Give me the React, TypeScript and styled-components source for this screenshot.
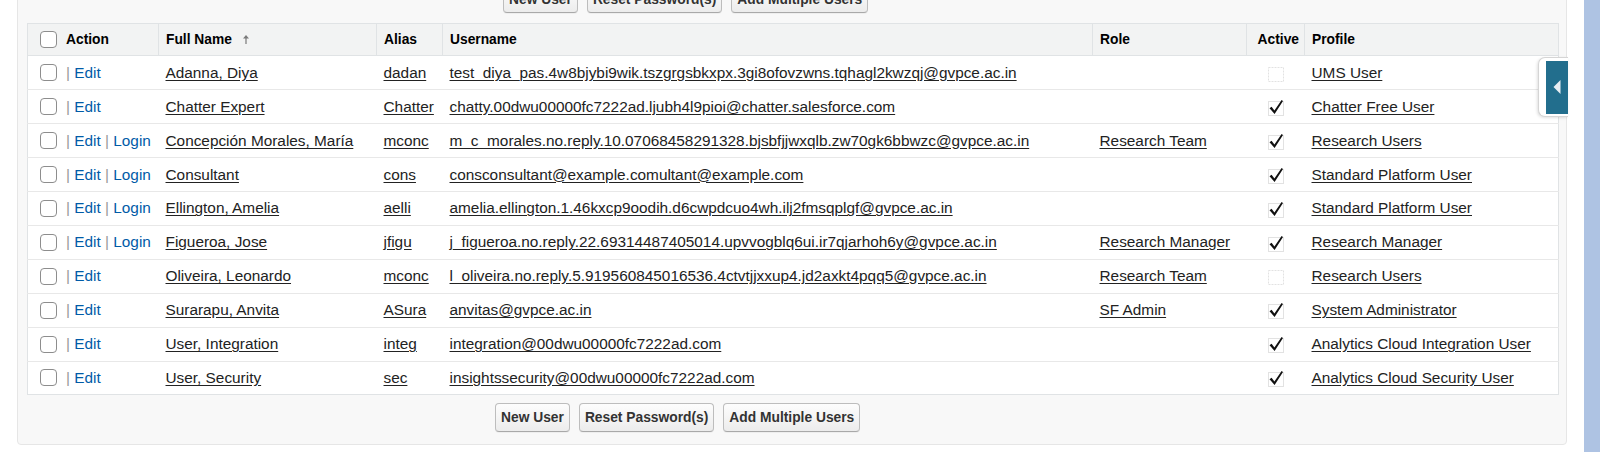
import styled, { createGlobalStyle } from 'styled-components';

const GlobalStyle = createGlobalStyle`
  html, body {
    margin: 0;
    padding: 0;
    background: #fff;
  }
  body {
    font-family: 'Liberation Sans', Arial, Helvetica, sans-serif;
    overflow: hidden;
  }
`;

const Page = styled.div`
  position: relative;
  display: flex;
  width: 1600px;
  height: 452px;
  overflow: hidden;
  padding-left: 17px;
  box-sizing: border-box;
`;

const Panel = styled.div`
  width: 1550px;
  height: 465px;
  margin-top: -20px;
  box-sizing: border-box;
  background: #f8f8f8;
  border: 1px solid #e6e6e6;
  border-radius: 4px;
  padding: 0 8.5px 0 9px;
  flex-shrink: 0;
`;

const SideStrip = styled.div`
  margin-left: 17px;
  width: 16px;
  height: 100%;
  background: #aec3e3;
  flex-shrink: 0;
`;

const ButtonBar = styled.div<{ $offset: number; $top: number; $bottom: number }>`
  display: flex;
  gap: 9px;
  padding: ${(p) => p.$top}px 0 ${(p) => p.$bottom}px ${(p) => p.$offset}px;
`;

const Button = styled.button`
  height: 28.5px;
  padding: 0 5px;
  box-sizing: border-box;
  font-family: inherit;
  font-size: 13.8px;
  font-weight: bold;
  color: #333;
  background: linear-gradient(#fdfdfd, #ececec);
  border: 1px solid #bdbdbd;
  border-bottom-color: #a9a9a9;
  border-radius: 4px;
  box-shadow: 0 1px 0 rgba(0, 0, 0, 0.04);
  cursor: pointer;
`;

const Table = styled.table`
  width: 1530.5px;
  table-layout: fixed;
  border-collapse: collapse;
  background: #fff;
  border: 1px solid #e0e3e5;
`;

const HeadRow = styled.tr`
  height: 32.5px;
  background: #f2f3f3;
  border-bottom: 1px solid #e0e3e5;
`;

const Th = styled.th<{ $align?: string }>`
  padding: 0 ${(p) => (p.$align === 'right' ? '5px' : '7px')};
  text-align: ${(p) => p.$align || 'left'};
  font-size: 13.8px;
  font-weight: bold;
  color: #000;
  white-space: nowrap;
  border-left: 1px solid #e0e3e5;
  &:first-child {
    border-left: none;
    padding-left: 12px;
  }
`;

const Row = styled.tr`
  height: 33.9px;
  border-bottom: 1px solid #e8e8e8;
  &:last-child {
    border-bottom: none;
  }
`;

const Td = styled.td<{ $center?: boolean }>`
  padding: 0 7px;
  font-size: 15.36px;
  color: #222;
  white-space: nowrap;
  overflow: hidden;
  text-align: ${(p) => (p.$center ? 'center' : 'left')};
  &:first-child {
    padding-left: 12px;
  }
`;

const Cell = styled.div`
  display: flex;
  align-items: center;
`;

const Box = styled.span`
  display: inline-block;
  width: 15px;
  height: 15px;
  border: 1px solid #8d8d8d;
  border-radius: 4px;
  background: #fff;
  margin-right: 9px;
  flex-shrink: 0;
`;

const Pipe = styled.span`
  color: #9a9a9a;
  white-space: pre;
`;

const ActionLink = styled.a`
  color: #015ba7;
  text-decoration: none;
`;

const DataLink = styled.a`
  color: #222;
  text-decoration: underline;
  text-underline-offset: 2px;
`;

const SortArrow = styled.svg`
  margin-left: 11px;
  vertical-align: 0;
`;

const HandleWrap = styled.div`
  position: absolute;
  left: 1538px;
  top: 57px;
  width: 30px;
  height: 60px;
  box-sizing: border-box;
  background: #fff;
  border: 1px solid #d5d5d5;
  border-right: none;
  border-radius: 7px 0 0 7px;
  box-shadow: -1px 1px 3px rgba(0, 0, 0, 0.12);
  display: flex;
  align-items: center;
  justify-content: flex-end;
`;

const Handle = styled.div`
  width: 22px;
  height: 53px;
  background: #226e8d;
  display: flex;
  align-items: center;
  justify-content: center;
`;

type User = {
  login: boolean;
  name: string;
  alias: string;
  username: string;
  role: string;
  active: boolean;
  profile: string;
};

const users: User[] = [
  { login: false, name: 'Adanna, Diya', alias: 'dadan', username: 'test_diya_pas.4w8bjybi9wik.tszgrgsbkxpx.3gi8ofovzwns.tqhagl2kwzqj@gvpce.ac.in', role: '', active: false, profile: 'UMS User' },
  { login: false, name: 'Chatter Expert', alias: 'Chatter', username: 'chatty.00dwu00000fc7222ad.ljubh4l9pioi@chatter.salesforce.com', role: '', active: true, profile: 'Chatter Free User' },
  { login: true, name: 'Concepción Morales, María', alias: 'mconc', username: 'm_c_morales.no.reply.10.07068458291328.bjsbfjjwxqlb.zw70gk6bbwzc@gvpce.ac.in', role: 'Research Team', active: true, profile: 'Research Users' },
  { login: true, name: 'Consultant', alias: 'cons', username: 'consconsultant@example.comultant@example.com', role: '', active: true, profile: 'Standard Platform User' },
  { login: true, name: 'Ellington, Amelia', alias: 'aelli', username: 'amelia.ellington.1.46kxcp9oodih.d6cwpdcuo4wh.ilj2fmsqplgf@gvpce.ac.in', role: '', active: true, profile: 'Standard Platform User' },
  { login: true, name: 'Figueroa, Jose', alias: 'jfigu', username: 'j_figueroa.no.reply.22.69314487405014.upvvogblq6ui.ir7qjarhoh6y@gvpce.ac.in', role: 'Research Manager', active: true, profile: 'Research Manager' },
  { login: false, name: 'Oliveira, Leonardo', alias: 'mconc', username: 'l_oliveira.no.reply.5.919560845016536.4ctvtjjxxup4.jd2axkt4pqq5@gvpce.ac.in', role: 'Research Team', active: false, profile: 'Research Users' },
  { login: false, name: 'Surarapu, Anvita', alias: 'ASura', username: 'anvitas@gvpce.ac.in', role: 'SF Admin', active: true, profile: 'System Administrator' },
  { login: false, name: 'User, Integration', alias: 'integ', username: 'integration@00dwu00000fc7222ad.com', role: '', active: true, profile: 'Analytics Cloud Integration User' },
  { login: false, name: 'User, Security', alias: 'sec', username: 'insightssecurity@00dwu00000fc7222ad.com', role: '', active: true, profile: 'Analytics Cloud Security User' },
];

function ActiveMark({ on }: { on: boolean }) {
  return (
    <svg width="18" height="17" viewBox="0 0 18 17" style={{ verticalAlign: 'middle' }}>
      <rect x="1.5" y="2.5" width="15" height="14" fill="none" stroke="#e2e2e2" strokeDasharray={on ? undefined : '2 1'} />
      {on && <path d="M2.5 9.2 L4.6 7.8 L7.4 11.6 L14.6 1 L16 2 L7.6 15 Z" fill="#111" />}
    </svg>
  );
}

function Buttons({ offset, top, bottom }: { offset: number; top: number; bottom: number }) {
  return (
    <ButtonBar $offset={offset} $top={top} $bottom={bottom}>
      <Button>New User</Button>
      <Button>Reset Password(s)</Button>
      <Button>Add Multiple Users</Button>
    </ButtonBar>
  );
}

export default function App() {
  return (
    <Page>
      <GlobalStyle />
      <Panel>
        <Buttons offset={476} top={3.8} bottom={9.7} />
        <Table>
          <colgroup>
            <col style={{ width: 131 }} />
            <col style={{ width: 218 }} />
            <col style={{ width: 66 }} />
            <col style={{ width: 650 }} />
            <col style={{ width: 154 }} />
            <col style={{ width: 58 }} />
            <col style={{ width: 253.5 }} />
          </colgroup>
          <thead>
            <HeadRow>
              <Th>
                <Cell>
                  <Box />
                  Action
                </Cell>
              </Th>
              <Th>
                Full Name
                <SortArrow width="6" height="9" viewBox="0 0 6 9">
                  <path d="M3 0 L6 3.6 L3.6 3.6 L3.6 9 L2.4 9 L2.4 3.6 L0 3.6 Z" fill="#7a7a7a" />
                </SortArrow>
              </Th>
              <Th>Alias</Th>
              <Th>Username</Th>
              <Th>Role</Th>
              <Th $align="right">Active</Th>
              <Th>Profile</Th>
            </HeadRow>
          </thead>
          <tbody>
            {users.map((u) => (
              <Row key={u.username}>
                <Td>
                  <Cell>
                    <Box />
                    <Pipe>| </Pipe>
                    <ActionLink href="#">Edit</ActionLink>
                    {u.login && (
                      <>
                        <Pipe> | </Pipe>
                        <ActionLink href="#">Login</ActionLink>
                      </>
                    )}
                  </Cell>
                </Td>
                <Td>
                  <DataLink href="#">{u.name}</DataLink>
                </Td>
                <Td>
                  <DataLink href="#">{u.alias}</DataLink>
                </Td>
                <Td>
                  <DataLink href="#">{u.username}</DataLink>
                </Td>
                <Td>{u.role && <DataLink href="#">{u.role}</DataLink>}</Td>
                <Td $center>
                  <ActiveMark on={u.active} />
                </Td>
                <Td>
                  <DataLink href="#">{u.profile}</DataLink>
                </Td>
              </Row>
            ))}
          </tbody>
        </Table>
        <Buttons offset={468} top={7.7} bottom={0} />
      </Panel>
      <SideStrip />
      <HandleWrap>
        <Handle>
          <svg width="8" height="14" viewBox="0 0 8 14">
            <path d="M7.5 0 L7.5 14 L0.5 7 Z" fill="#e8eef3" />
          </svg>
        </Handle>
      </HandleWrap>
    </Page>
  );
}
